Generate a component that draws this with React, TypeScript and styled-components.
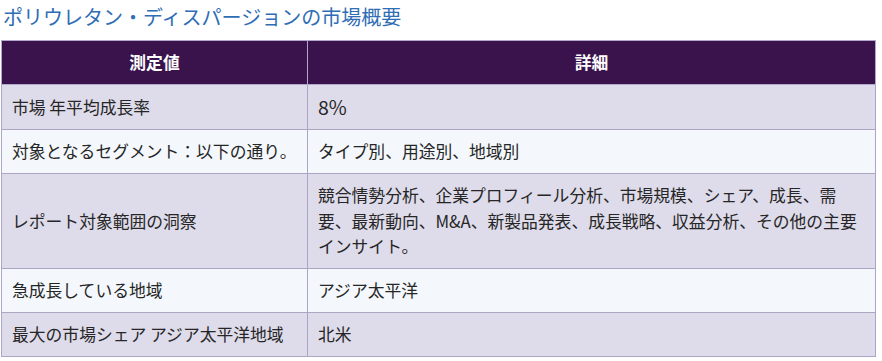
import styled, { createGlobalStyle } from "styled-components";

const rows = [
  { label: "市場 年平均成長率", value: "8%", big: true },
  { label: "対象となるセグメント：以下の通り。", value: "タイプ別、用途別、地域別" },
  {
    label: "レポート対象範囲の洞察",
    value:
      "競合情勢分析、企業プロフィール分析、市場規模、シェア、成長、需要、最新動向、M&A、新製品発表、成長戦略、収益分析、その他の主要インサイト。",
  },
  { label: "急成長している地域", value: "アジア太平洋" },
  { label: "最大の市場シェア アジア太平洋地域", value: "北米" },
];

export default function App() {
  return (
    <>
      <GlobalStyle />
      <Page>
        <Title>ポリウレタン・ディスパージョンの市場概要</Title>
        <Table>
          <colgroup>
            <col style={{ width: 306 }} />
            <col />
          </colgroup>
          <thead>
            <tr>
              <HeadCell>測定値</HeadCell>
              <HeadCell>詳細</HeadCell>
            </tr>
          </thead>
          <tbody>
            {rows.map((row, i) => (
              <Row key={i} $odd={i % 2 === 0}>
                <Cell>{row.label}</Cell>
                <Cell $big={row.big}>{row.value}</Cell>
              </Row>
            ))}
          </tbody>
        </Table>
      </Page>
    </>
  );
}

const GlobalStyle = createGlobalStyle`
  body {
    margin: 0;
    background: #ffffff;
    font-family: "Noto Sans CJK JP", "Noto Sans", sans-serif;
  }
`;

const Page = styled.div`
  padding: 0 6px 0 1px;
`;

const Title = styled.h3`
  margin: 0 0 8px 2px;
  padding-top: 2px;
  font-size: 20px;
  line-height: 30px;
  font-weight: 400;
  color: #2f6db5;
`;

const Table = styled.table`
  width: 875px;
  border-collapse: collapse;
  table-layout: fixed;
  font-size: 16.8px;
  line-height: 25.2px;
  color: #262626;
`;

const HeadCell = styled.th`
  padding: 9px 10px;
  background: #3a124c;
  color: #ffffff;
  font-weight: 700;
  text-align: center;
  border: 1px solid #b3a8cc;
`;

const Row = styled.tr<{ $odd: boolean }>`
  background: ${(p) => (p.$odd ? "#dedbea" : "#f4f8fc")};
`;

const Cell = styled.td<{ $big?: boolean }>`
  padding: 9px 10px;
  border: 1px solid #aaa6c4;
  vertical-align: middle;
  font-size: ${(p) => (p.$big ? "19.5px" : "inherit")};
  line-height: ${(p) => (p.$big ? "26px" : "inherit")};
`;
